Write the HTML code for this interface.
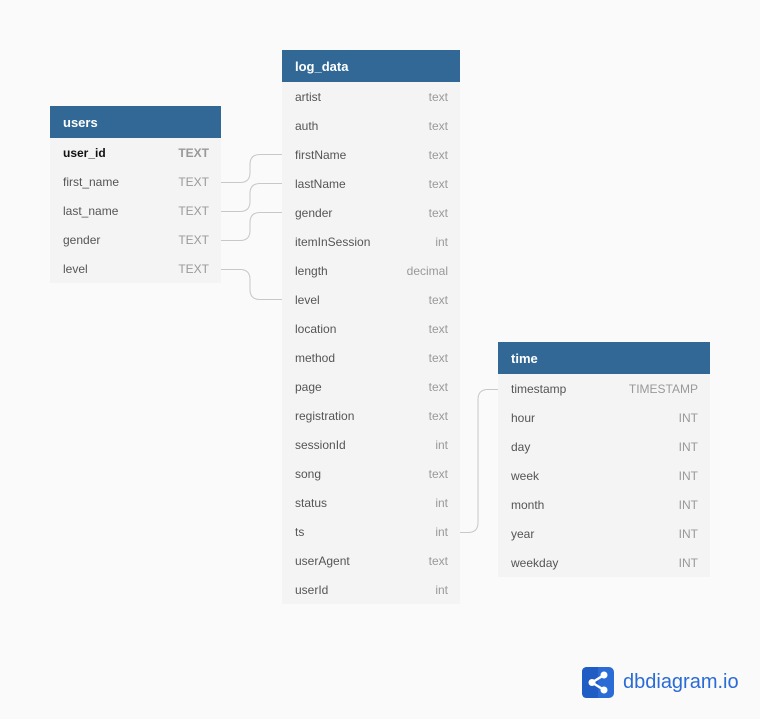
<!DOCTYPE html>
<html><head><style>
body{margin:0;width:760px;height:719px;background:#fafafa;position:relative;font-family:"Liberation Sans",Arial,sans-serif;overflow:hidden}
.t{position:absolute;background:#f4f4f4}
.h{height:32px;background:#316896;color:#fff;font-weight:bold;font-size:13px;line-height:34px;padding-left:13px}
.r{height:29px;line-height:31px;font-size:12px;color:#555;padding:0 12px 0 13px;display:flex;justify-content:space-between}
.r span:last-child{color:#999}
.b{color:#111;font-weight:bold}
.b span:last-child{font-weight:bold;color:#999}
</style></head><body>
<svg width="760" height="719" style="position:absolute;left:0;top:0" fill="none" stroke="#c8c8c8" stroke-width="1">
<path d="M221 182.5H240Q250 182.5 250 172.5V164.5Q250 154.5 260 154.5H282"/>
<path d="M221 211.5H240Q250 211.5 250 201.5V193.5Q250 183.5 260 183.5H282"/>
<path d="M221 240.5H240Q250 240.5 250 230.5V222.5Q250 212.5 260 212.5H282"/>
<path d="M221 269.5H240Q250 269.5 250 279.5V289.5Q250 299.5 260 299.5H282"/>
<path d="M460 532.5H468Q478 532.5 478 522.5V399.5Q478 389.5 488 389.5H498"/>
</svg>
<div class="t" style="left:50px;top:106px;width:171px">
<div class="h">users</div>
<div class="r b"><span>user_id</span><span>TEXT</span></div>
<div class="r"><span>first_name</span><span>TEXT</span></div>
<div class="r"><span>last_name</span><span>TEXT</span></div>
<div class="r"><span>gender</span><span>TEXT</span></div>
<div class="r"><span>level</span><span>TEXT</span></div>
</div>
<div class="t" style="left:282px;top:50px;width:178px">
<div class="h">log_data</div>
<div class="r"><span>artist</span><span>text</span></div>
<div class="r"><span>auth</span><span>text</span></div>
<div class="r"><span>firstName</span><span>text</span></div>
<div class="r"><span>lastName</span><span>text</span></div>
<div class="r"><span>gender</span><span>text</span></div>
<div class="r"><span>itemInSession</span><span>int</span></div>
<div class="r"><span>length</span><span>decimal</span></div>
<div class="r"><span>level</span><span>text</span></div>
<div class="r"><span>location</span><span>text</span></div>
<div class="r"><span>method</span><span>text</span></div>
<div class="r"><span>page</span><span>text</span></div>
<div class="r"><span>registration</span><span>text</span></div>
<div class="r"><span>sessionId</span><span>int</span></div>
<div class="r"><span>song</span><span>text</span></div>
<div class="r"><span>status</span><span>int</span></div>
<div class="r"><span>ts</span><span>int</span></div>
<div class="r"><span>userAgent</span><span>text</span></div>
<div class="r"><span>userId</span><span>int</span></div>
</div>
<div class="t" style="left:498px;top:342px;width:212px">
<div class="h">time</div>
<div class="r"><span>timestamp</span><span>TIMESTAMP</span></div>
<div class="r"><span>hour</span><span>INT</span></div>
<div class="r"><span>day</span><span>INT</span></div>
<div class="r"><span>week</span><span>INT</span></div>
<div class="r"><span>month</span><span>INT</span></div>
<div class="r"><span>year</span><span>INT</span></div>
<div class="r"><span>weekday</span><span>INT</span></div>
</div>
<svg style="position:absolute;left:582px;top:667px" width="32" height="31" viewBox="0 0 32 31">
<rect width="32" height="31" rx="5" fill="#2a6bd6"/>
<path d="M0 5Q0 0 5 0H16V31H5Q0 31 0 26Z" fill="#1f5cc4"/>
<path d="M22 8L10 15.5L22 23" stroke="#fff" stroke-width="2.5" fill="none"/>
<circle cx="22" cy="8" r="3.5" fill="#fff"/><circle cx="10" cy="15.5" r="3.5" fill="#fff"/><circle cx="22" cy="23" r="3.5" fill="#fff"/>
</svg>
<div style="position:absolute;left:623px;top:671px;font-size:20px;color:#2a6bd6">dbdiagram.io</div>
</body></html>
